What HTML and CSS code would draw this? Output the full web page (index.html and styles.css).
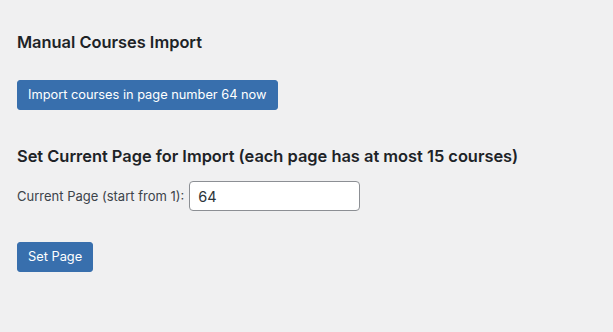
FILE: index.html
```html
<!DOCTYPE html>
<html>
<head>
<meta charset="utf-8">
<link rel="stylesheet" href="styles.css">
</head>
<body>
<div class="wrap">
  <h2 class="title">Manual Courses Import</h2>
  <button class="button">Import courses in page number 64 now</button>
  <h2 class="title second">Set Current Page for Import (each page has at most 15 courses)</h2>
  <div class="field">
    <label class="label" for="page">Current Page (start from 1):</label>
    <input class="input" id="page" type="text" value="64">
  </div>
  <button class="button">Set Page</button>
</div>
</body>
</html>
```

FILE: styles.css
```css
html, body {
  margin: 0;
  padding: 0;
  background: #f0f0f1;
}
body {
  font-family: Inter, "Noto Sans", sans-serif;
  color: #1d2327;
  width: 613px;
  height: 332px;
  overflow: hidden;
}
.wrap {
  padding: 31px 17px 0 17px;
  display: flex;
  flex-direction: column;
  align-items: flex-start;
}
.title {
  font-size: 16.4px;
  font-weight: 600;
  line-height: 22px;
  margin: 0;
  color: #1d2327;
}
.second {
  margin-top: 35px;
}
.button {
  margin-top: 27px;
  height: 30px;
  padding: 0 10px;
  background: #386fad;
  color: #ffffff;
  border: 1px solid #386fad;
  border-radius: 3px;
  font-family: Inter, "Noto Sans", sans-serif;
  font-size: 12.8px;
  line-height: 28px;
}
.field {
  margin-top: 14px;
  display: flex;
  align-items: center;
  gap: 5px;
}
.label {
  font-size: 13px;
  color: #3c434a;
}
.input {
  box-sizing: border-box;
  width: 171px;
  height: 30px;
  border: 1px solid #8c8f94;
  border-radius: 4px;
  background: #ffffff;
  padding: 0 8px;
  font-family: Inter, "Noto Sans", sans-serif;
  font-size: 14.5px;
  color: #2c3338;
}
.field + .button {
  margin-top: 31px;
}
```
